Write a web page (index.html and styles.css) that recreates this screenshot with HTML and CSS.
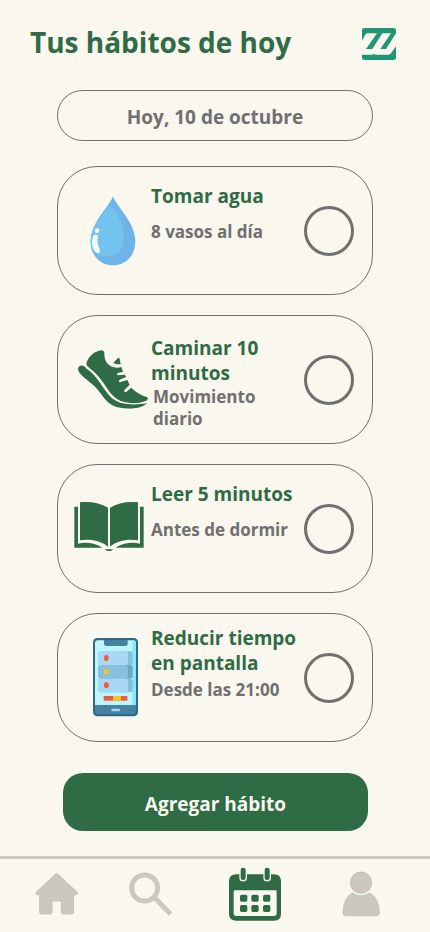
FILE: index.html
```html
<!DOCTYPE html>
<html lang="es">
<head>
<meta charset="utf-8">
<meta name="viewport" content="width=device-width, initial-scale=1">
<title>Tus hábitos de hoy</title>
<link rel="stylesheet" href="styles.css">
</head>
<body>
<header class="header">
  <h1 class="header-title">Tus hábitos de hoy</h1>
  <svg class="logo" viewBox="0 0 102 96" aria-hidden="true">
    <path fill="#1f9674" d="M7 0H95Q102 0 102 7V16L72 63H55L87 16H61L31 63H12L45 16H16Q12 16 9 21L0 38V7Q0 0 7 0Z"/>
    <path fill="#1f9674" d="M0 80H32L36 77L39 80H80Q84 80 87 76L102 55V89Q102 96 95 96H7Q0 96 0 89Z"/>
  </svg>
</header>

<main class="content">
  <p class="date">Hoy, 10 de octubre</p>

  <ul class="habits">
    <li class="habit habit-spaced">
      <svg class="habit-icon" width="46" height="70" viewBox="120 110 138 210" aria-hidden="true">
        <path fill="#6db5e9" d="M189 111C202 145 256 190 256 246C256 290 226 318 189 318S122 290 122 246C122 190 176 145 189 111Z"/>
        <path fill="#72c4ef" d="M179 136C205 164 222 198 222 235C222 270 201 291 167 291C151 291 137 286 127 277C118 255 122 226 132 207C145 178 164 158 179 136Z"/>
        <circle cx="141" cy="214" r="7" fill="#f7fafb"/>
        <path fill="#f3f8fb" d="M129 231C134 224 144 224 144 232C140 248 145 258 150 273C151 281 144 284 138 279C125 268 124 245 129 231Z"/>
      </svg>
      <label class="habit-text" for="agua">
        <span class="habit-name">Tomar agua</span>
        <span class="habit-detail">8 vasos al día</span>
      </label>
      <input class="habit-check" type="checkbox" id="agua">
    </li>

    <li class="habit habit-lowered">
      <svg class="habit-icon" width="70" height="60" viewBox="24 43 210 180" aria-hidden="true">
        <g fill="#2f6b45">
          <path d="M49 83C56 61 73 47 94 44Q102 44 103 52C102 73 111 88 129 94Q143 99 154 94L159 108L143 112Q139 116 143 119L165 117L168 124L149 132Q145 137 149 140L172 133L179 147L163 163Q161 170 168 170L184 156C196 170 215 179 232 185Q236 190 229 195C199 207 163 204 142 191C112 171 99 127 61 99Q49 92 49 83Z"/>
          <path d="M130 81L144 67Q148 64 149 70L152 85Q141 88 130 81Z"/>
          <path d="M26 94C32 87 43 88 48 98C83 119 99 162 122 184C151 211 194 208 231 203C222 214 196 221 164 218C126 215 112 202 91 172C76 151 60 141 45 128C28 113 21 103 26 94Z"/>
        </g>
      </svg>
      <label class="habit-text" for="caminar">
        <span class="habit-name">Caminar 10 minutos</span>
        <span class="habit-detail habit-detail-narrow">Movimiento diario</span>
      </label>
      <input class="habit-check" type="checkbox" id="caminar">
    </li>

    <li class="habit habit-spaced">
      <svg class="habit-icon habit-icon-book" width="70" height="51" viewBox="27 34 210 153" aria-hidden="true">
        <g fill="#2f6b45">
          <path d="M28 51H39V162C65 156 92 161 112 174H28Z"/>
          <path d="M236 51H225V162C199 156 172 161 152 174H236Z"/>
          <path d="M45 38C76 34 106 40 129 54V171C107 153 77 147 45 152Z"/>
          <path d="M219 38C188 34 158 40 135 54V171C157 153 187 147 219 152Z"/>
          <path d="M120 179H144Q141 184 136 184H128Q123 184 120 179Z"/>
        </g>
      </svg>
      <label class="habit-text" for="leer">
        <span class="habit-name">Leer 5 minutos</span>
        <span class="habit-detail">Antes de dormir</span>
      </label>
      <input class="habit-check" type="checkbox" id="leer">
    </li>

    <li class="habit habit-raised">
      <svg class="habit-icon habit-icon-phone" width="45" height="79" viewBox="39 27 135 237" aria-hidden="true">
        <rect x="39" y="27" width="135" height="235" rx="13" fill="#316887"/>
        <path fill="#bdf5ff" d="M45 42Q45 34 53 34H160Q168 34 168 42V229H45Z"/>
        <path fill="#84e9fa" d="M157 34H160Q168 34 168 42V229H157Z"/>
        <path fill="#4581a1" d="M72 33H143V45Q143 51 136 51H79Q72 51 72 45ZM45 229H168V247Q168 256 159 256H54Q45 256 45 247Z"/>
        <rect x="55" y="67" width="103" height="41" rx="7" fill="#85bfdf"/>
        <rect x="55" y="67" width="89" height="41" rx="7" fill="#a8d9f4"/>
        <rect x="55" y="108" width="103" height="41" rx="7" fill="#6ca8ca"/>
        <rect x="55" y="108" width="89" height="41" rx="7" fill="#89bfde"/>
        <rect x="55" y="149" width="103" height="41" rx="7" fill="#85bfdf"/>
        <rect x="55" y="149" width="89" height="41" rx="7" fill="#a8d9f4"/>
        <ellipse cx="79" cy="87" rx="7" ry="9" fill="#f2583c"/>
        <ellipse cx="79" cy="128" rx="7" ry="9" fill="#f8c51a"/>
        <ellipse cx="79" cy="169" rx="7" ry="9" fill="#f2583c"/>
        <path fill="#f2583c" d="M71 201H142V215H71Z"/>
        <path fill="#f8c51a" d="M99 201H123V215H99Z"/>
        <rect x="94" y="239" width="26" height="8" rx="3" fill="#a8d9f4"/>
      </svg>
      <label class="habit-text" for="pantalla">
        <span class="habit-name">Reducir tiempo en pantalla</span>
        <span class="habit-detail">Desde las 21:00</span>
      </label>
      <input class="habit-check" type="checkbox" id="pantalla">
    </li>
  </ul>

  <button class="add" type="button">Agregar hábito</button>
</main>

<nav class="nav" aria-label="Principal">
  <a class="nav-link" href="#inicio" aria-label="Inicio">
    <svg width="43" height="42" viewBox="103 69 129 126">
      <path fill="#ccc8c0" stroke="#b4c3b2" stroke-width="2.500" stroke-linejoin="round" d="M164 73Q168 70 172 73L229 126Q233 132 227 134H219V187Q219 192 214 192H187Q182 192 182 187V153H154V187Q154 192 149 192H122Q117 192 117 187V134H109Q103 132 107 126Z"/>
    </svg>
  </a>
  <a class="nav-link" href="#buscar" aria-label="Buscar">
    <svg width="44" height="44" viewBox="389 69 132 132">
      <circle cx="436" cy="117" r="39" fill="none" stroke="#ccc8c0" stroke-width="15"/>
      <path d="M464 145L514 195" stroke="#ccc8c0" stroke-width="15"/>
    </svg>
  </a>
  <a class="nav-link" href="#calendario" aria-label="Calendario" aria-current="page">
    <svg width="54" height="54" viewBox="39 52 162 162">
      <path fill="#2f6b45" fill-rule="evenodd" d="M64 74H177Q198 74 198 95V192Q198 213 177 213H64Q42 213 42 192V95Q42 74 64 74ZM60 122Q56 122 56 126V191Q56 199 64 199H177Q185 199 185 191V126Q185 122 181 122Z"/>
      <g fill="#2f6b45" stroke="#faf7ee" stroke-width="4">
        <rect x="75" y="52" width="19" height="41" rx="9"/>
        <rect x="147" y="52" width="19" height="41" rx="9"/>
      </g>
      <g fill="#2f6b45">
        <rect x="75" y="135" width="22" height="21" rx="5"/>
        <rect x="109" y="135" width="22" height="21" rx="5"/>
        <rect x="144" y="135" width="22" height="21" rx="5"/>
        <rect x="75" y="166" width="22" height="21" rx="5"/>
        <rect x="109" y="166" width="22" height="21" rx="5"/>
        <rect x="144" y="166" width="22" height="21" rx="5"/>
      </g>
    </svg>
  </a>
  <a class="nav-link" href="#perfil" aria-label="Perfil">
    <svg width="38" height="46" viewBox="379 66 114 138">
      <g fill="#ccc8c0" stroke="#b4c3b2" stroke-width="2.500">
        <circle cx="436" cy="101" r="32"/>
        <path d="M410 132Q436 149 462 132C483 143 491 169 491 192Q491 200 483 200H390Q382 200 382 192C382 169 390 143 410 132Z"/>
      </g>
    </svg>
  </a>
</nav>
</body>
</html>
```

FILE: styles.css
```css
:root {
  --cream: #faf7ee;
  --green: #2f6b45;
  --gray: #707070;
  --muted: #ccc8c0;
}

* {
  box-sizing: border-box;
}

body {
  display: flex;
  flex-direction: column;
  min-height: 100vh;
  margin: 0;
  background: var(--cream);
  color: var(--gray);
  font-family: "Open Sans", "Noto Sans", sans-serif;
  font-weight: 700;
}

.header {
  display: flex;
  justify-content: space-between;
  align-items: center;
  padding: 22px 34px 0 30px;
}

.header-title {
  margin: 0;
  color: var(--green);
  font-size: 28px;
  line-height: 40px;
}

.logo {
  width: 34px;
  height: 32px;
  margin-top: 4px;
}

.content {
  display: flex;
  flex-direction: column;
  padding: 28px 57px 25px;
}

.date {
  margin: 0 0 25px;
  padding: 14px 12px 10px;
  border: 1px solid var(--gray);
  border-radius: 26px;
  font-size: 19px;
  line-height: 25px;
  text-align: center;
}

.habits {
  display: grid;
  gap: 20px;
  margin: 0;
  padding: 0;
  list-style: none;
}

.habit {
  display: grid;
  grid-template-columns: 77px 1fr 50px;
  align-items: center;
  min-height: 129px;
  padding: 0 18px 0 16px;
  border: 1px solid var(--gray);
  border-radius: 40px;
}

.habit-icon {
  justify-self: center;
}

.habit-icon-book {
  justify-self: start;
  margin-bottom: 4px;
}

.habit-icon-phone {
  margin-left: 6px;
}

.habit-text {
  display: flex;
  flex-direction: column;
  align-self: start;
  padding: 17px 0 8px;
}

.habit-name {
  color: var(--green);
  font-size: 19px;
  line-height: 25px;
}

.habit-detail {
  font-size: 17px;
  line-height: 22px;
}

.habit-detail-narrow {
  max-width: 120px;
  padding-left: 2px;
}

.habit-spaced .habit-text {
  gap: 12px;
}

.habit-lowered .habit-text {
  padding-top: 20px;
}

.habit-raised .habit-text {
  gap: 3px;
  padding-top: 12px;
}

.habit-check {
  width: 50px;
  height: 50px;
  margin: 0;
  border: 3px solid var(--gray);
  border-radius: 50%;
  appearance: none;
}

.habit-check:checked {
  background: var(--green);
}

.add {
  margin: 31px 5px 0 6px;
  padding: 18px 16px 14px;
  border: 0;
  border-radius: 20px;
  background: var(--green);
  color: var(--cream);
  font: inherit;
  font-size: 19px;
  line-height: 26px;
}

.nav {
  display: grid;
  grid-template-columns: 112fr 78fr 130fr 82fr;
  align-items: center;
  flex: 1;
  padding: 0 28px 3px 0;
  border-top: 3px solid var(--muted);
}

.nav-link {
  display: flex;
  justify-content: center;
}
```
